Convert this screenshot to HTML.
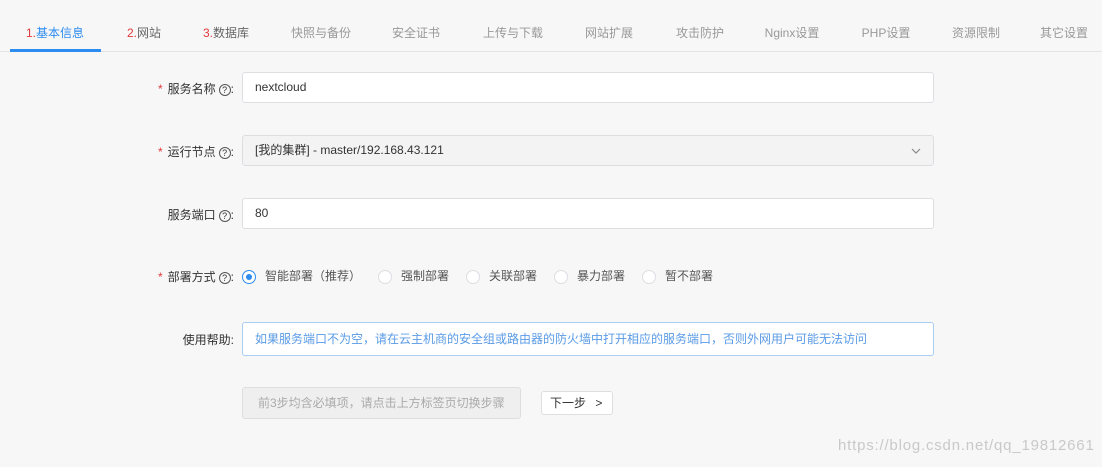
<!DOCTYPE html>
<html><head><meta charset="utf-8"><style>
body{margin:0;width:1102px;height:467px;background:#f7f7f7;font-family:"Liberation Sans","Noto Sans CJK SC",sans-serif;font-size:12px;color:#333;position:relative;overflow:hidden}
.tab{position:absolute;top:24px;color:#999;transform:translateX(-50%);white-space:nowrap;font-size:12px}
.tab b{font-weight:normal;color:#e4393c}
.line{position:absolute;left:0;right:0;top:51px;height:1px;background:#e4e4e4}
.ul{position:absolute;left:10px;width:91px;top:49px;height:3px;background:#2d8cf0}
.lab{position:absolute;right:868px;white-space:nowrap;color:#333}
.lab i{font-style:normal;color:#e4393c;margin-right:5px}
.q{display:inline-block;width:10px;height:10px;border:1px solid #555;border-radius:50%;font-size:9px;line-height:10px;text-align:center;margin-left:3px;vertical-align:0px}
.inp{position:absolute;left:242px;width:692px;height:31px;background:#fff;border:1px solid #dcdee2;border-radius:3px;box-sizing:border-box;padding-left:12px;line-height:29px;color:#333}
.rad{position:absolute;top:268px;height:16px;line-height:16px;white-space:nowrap;color:#555}
.rad span{display:inline-block;width:14px;height:14px;border:1px solid #dcdee2;border-radius:50%;background:#fff;vertical-align:-4px;margin-right:9px;box-sizing:border-box;position:relative}
.rad span.on{border-color:#2d8cf0}
.rad span.on:after{content:"";position:absolute;left:3px;top:3px;width:6px;height:6px;border-radius:50%;background:#2d8cf0}
</style></head><body>
<div class="tab" style="left:55px;color:#2d8cf0"><b>1.</b>基本信息</div>
<div class="tab" style="left:144px;color:#666"><b>2.</b>网站</div>
<div class="tab" style="left:226px;color:#666"><b style="color:#e4393c">3.</b>数据库</div>
<div class="tab" style="left:321px">快照与备份</div>
<div class="tab" style="left:416px">安全证书</div>
<div class="tab" style="left:513px">上传与下载</div>
<div class="tab" style="left:609px">网站扩展</div>
<div class="tab" style="left:700px">攻击防护</div>
<div class="tab" style="left:792px">Nginx设置</div>
<div class="tab" style="left:886px">PHP设置</div>
<div class="tab" style="left:976px">资源限制</div>
<div class="tab" style="left:1064px">其它设置</div>
<div class="line"></div><div class="ul"></div>

<div class="lab" style="top:80px"><i>*</i>服务名称<span class="q">?</span>:</div>
<div class="inp" style="top:72px">nextcloud</div>
<div class="lab" style="top:143px"><i>*</i>运行节点<span class="q">?</span>:</div>
<div class="inp" style="top:135px;background:#f3f3f3">[我的集群] - master/192.168.43.121
<svg style="position:absolute;right:12px;top:11px" width="10" height="8"><path d="M1 2 L5 6 L9 2" fill="none" stroke="#888" stroke-width="1.2"/></svg></div>
<div class="lab" style="top:206px">服务端口<span class="q">?</span>:</div>
<div class="inp" style="top:198px">80</div>
<div class="lab" style="top:268px"><i>*</i>部署方式<span class="q">?</span>:</div>
<div class="rad" style="left:242px"><span class="on"></span>智能部署（推荐）</div>
<div class="rad" style="left:378px"><span></span>强制部署</div>
<div class="rad" style="left:466px"><span></span>关联部署</div>
<div class="rad" style="left:554px"><span></span>暴力部署</div>
<div class="rad" style="left:642px"><span></span>暂不部署</div>
<div class="lab" style="top:331px">使用帮助:</div>
<div class="inp" style="top:322px;height:34px;line-height:32px;border-color:#a9cdf5;color:#5a9be6">如果服务端口不为空，请在云主机商的安全组或路由器的防火墙中打开相应的服务端口，否则外网用户可能无法访问</div>
<div style="position:absolute;left:242px;top:387px;width:279px;height:32px;box-sizing:border-box;border:1px solid #dcdee2;border-radius:3px;background:#efefef;color:#aaa;line-height:30px;padding-left:15px">前3步均含必填项，请点击上方标签页切换步骤</div>
<div style="position:absolute;left:541px;top:391px;width:72px;height:24px;box-sizing:border-box;border:1px solid #dcdee2;border-radius:3px;background:#fff;line-height:22px;padding-left:8px">下一步 <span style="margin-left:6px">&gt;</span></div>
<div style="position:absolute;left:838px;top:437px;color:#c9c9c9;font-size:15px;letter-spacing:0.8px;white-space:nowrap">https://blog.csdn.net/qq_19812661</div>
</body></html>
